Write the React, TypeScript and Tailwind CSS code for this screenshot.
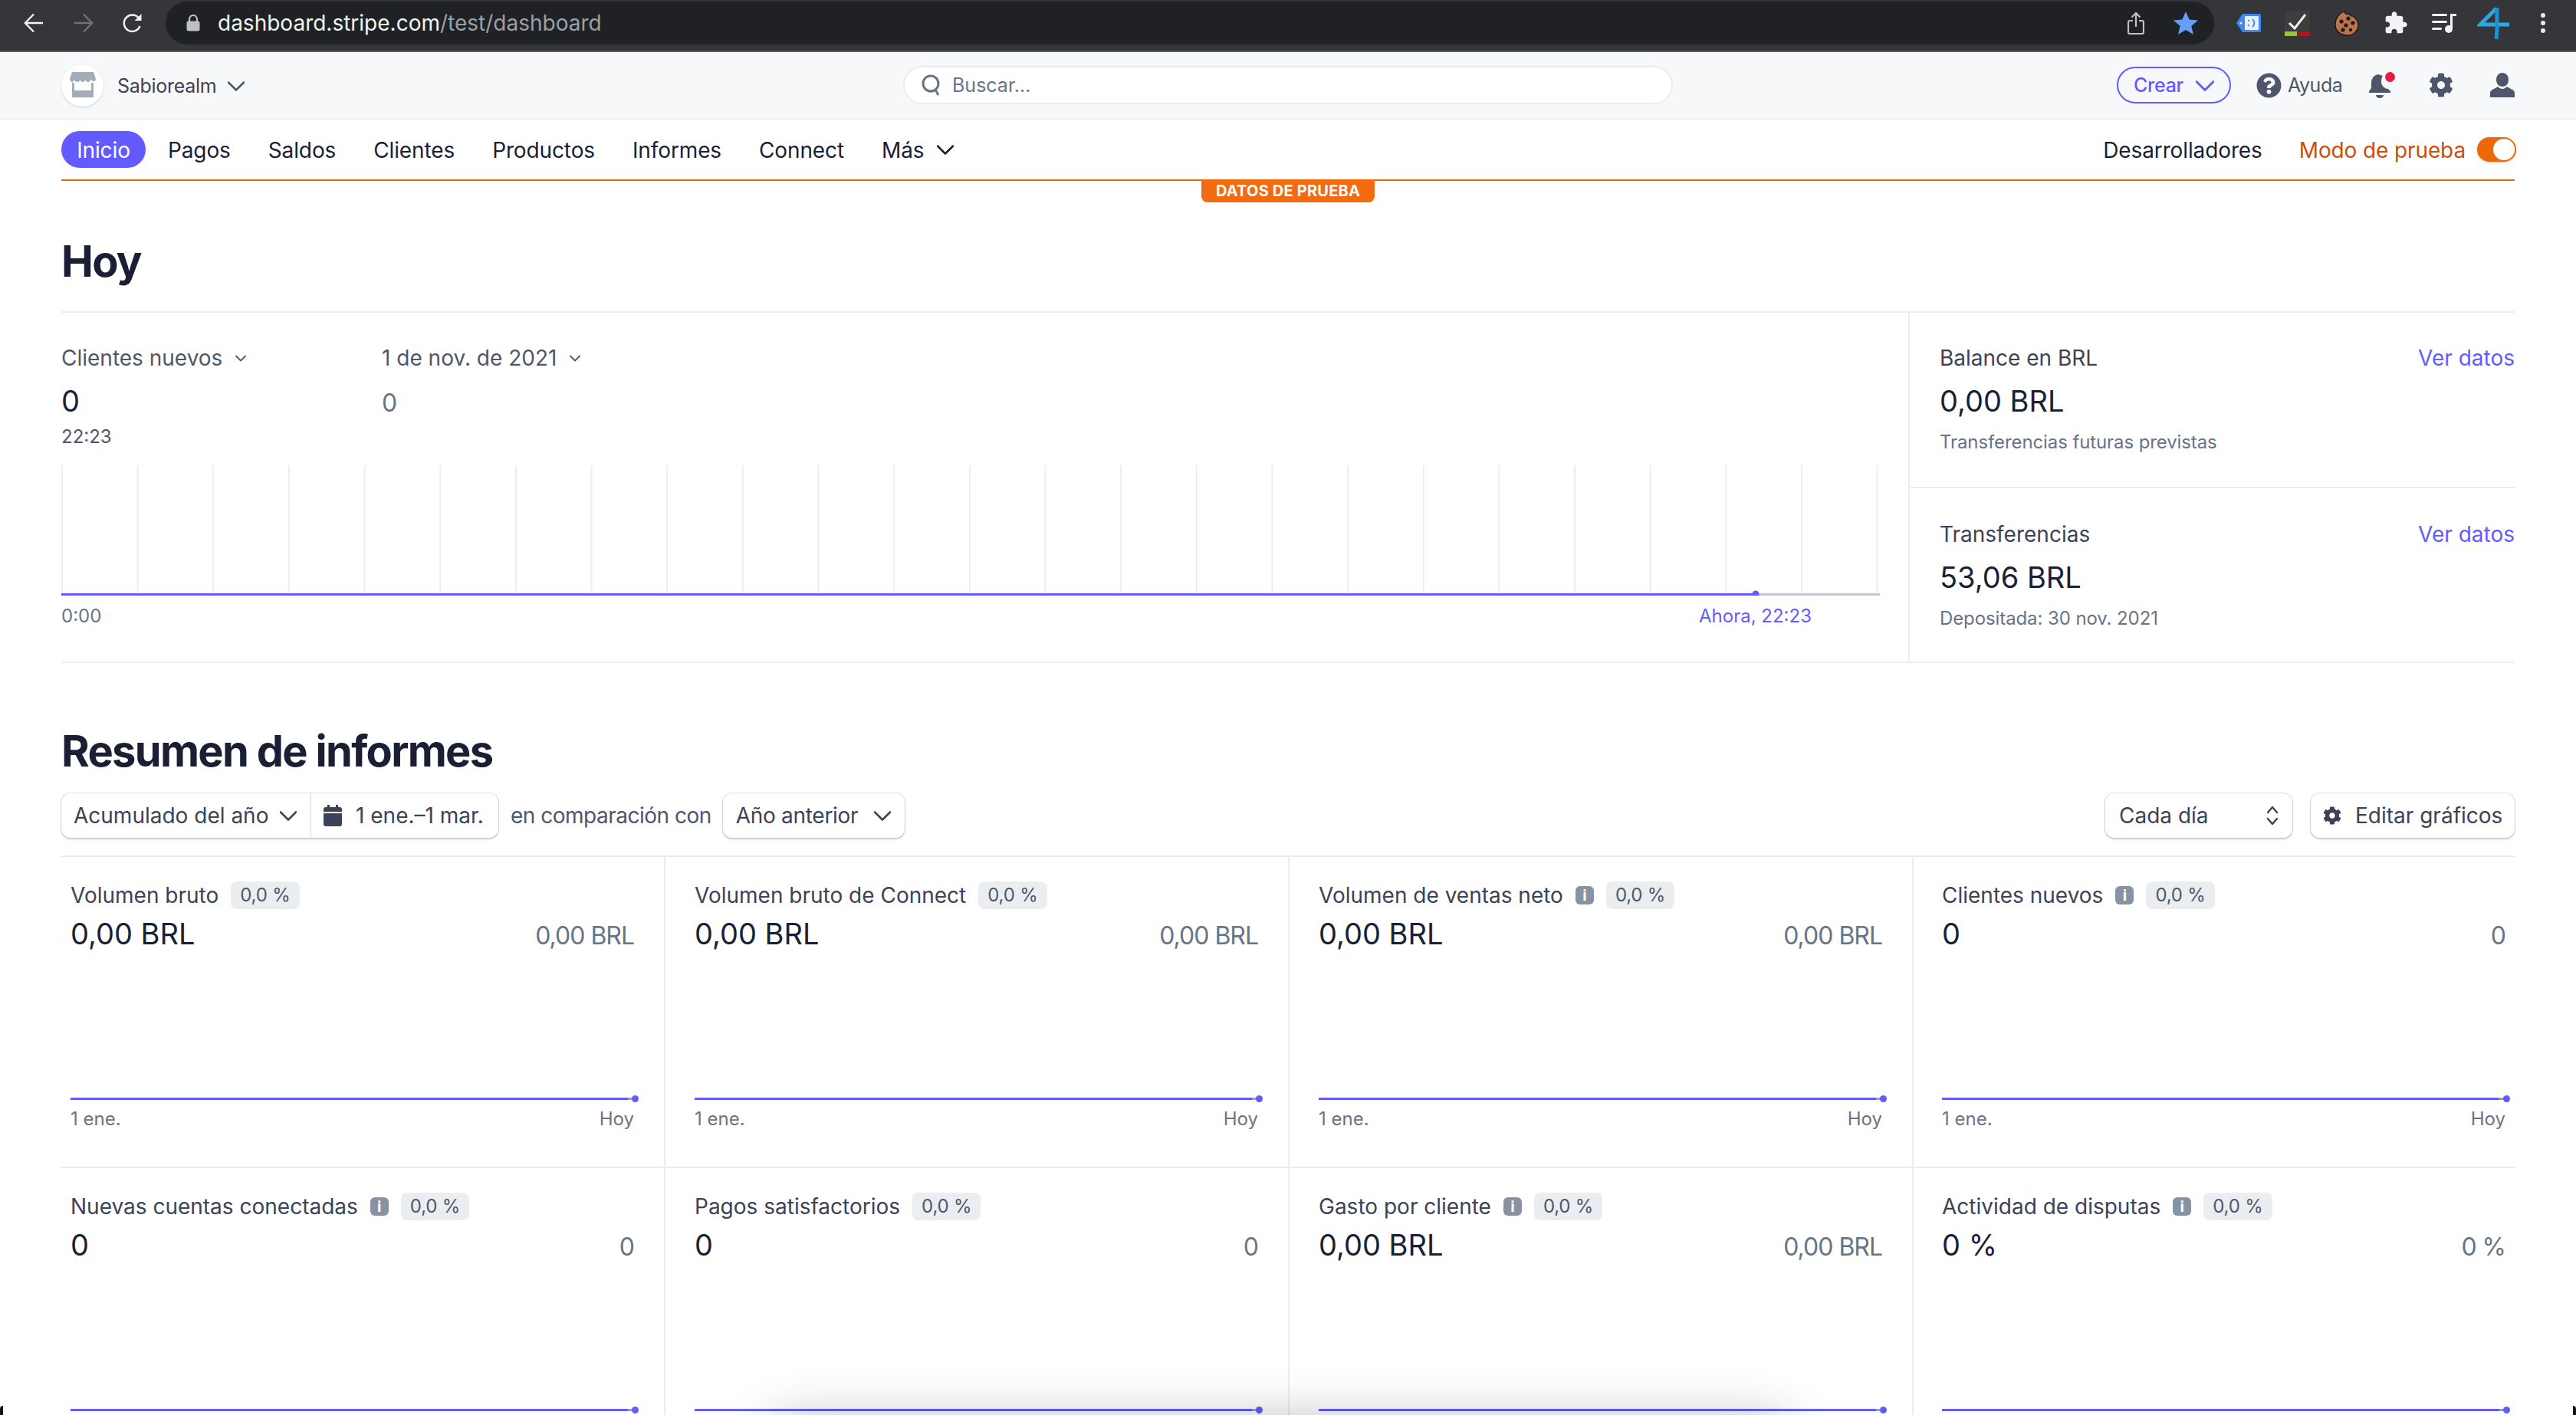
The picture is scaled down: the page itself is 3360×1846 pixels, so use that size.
import { FaCog, FaQuestionCircle } from "react-icons/fa";

const TABS = ["Pagos", "Saldos", "Clientes", "Productos", "Informes", "Connect"];

const CARDS = [
  { title: "Volumen bruto", value: "0,00 BRL", info: false, pad: "pl-3 pr-[39px]", axis: true },
  { title: "Volumen bruto de Connect", value: "0,00 BRL", info: false, pad: "pl-[38px] pr-[39px]", axis: true },
  { title: "Volumen de ventas neto", value: "0,00 BRL", info: true, pad: "pl-[38px] pr-[39px]", axis: true },
  { title: "Clientes nuevos", value: "0", info: true, pad: "pl-[37px] pr-3", axis: true },
  { title: "Nuevas cuentas conectadas", value: "0", info: true, pad: "pl-3 pr-[39px]", axis: false },
  { title: "Pagos satisfactorios", value: "0", info: false, pad: "pl-[38px] pr-[39px]", axis: false },
  { title: "Gasto por cliente", value: "0,00 BRL", info: true, pad: "pl-[38px] pr-[39px]", axis: false },
  { title: "Actividad de disputas", value: "0 %", info: true, pad: "pl-[37px] pr-3", axis: false },
];

function Chevron({ w, h, sw = 2.5, color = "currentColor" }: { w: number; h: number; sw?: number; color?: string }) {
  return (
    <svg width={w} height={h} viewBox={`0 0 ${w} ${h}`} fill="none" className="shrink-0">
      <path d={`M1 1.5 L${w / 2} ${h - 1.5} L${w - 1} 1.5`} stroke={color} strokeWidth={sw} strokeLinecap="round" strokeLinejoin="round" />
    </svg>
  );
}

function BrowserBar() {
  return (
    <div className="h-[68px] shrink-0 bg-[#35363a] border-b-2 border-[#5a5b5f] flex items-start pt-[2px] pl-[31px]">
      <div className="h-[56px] flex items-center gap-[39px]">
        <svg width="26" height="26" viewBox="0 0 26 26" fill="none" stroke="#f1f3f4" strokeWidth="2.4">
          <path d="M25 13H2M13 1.500 1.800 13 13 24.500" />
        </svg>
        <svg width="26" height="26" viewBox="0 0 26 26" fill="none" stroke="#6f7175" strokeWidth="2.4">
          <path d="M1 13h23M13 1.500 24.200 13 13 24.500" />
        </svg>
        <svg width="26" height="26" viewBox="0 0 26 26" fill="none" className="-ml-[1px]">
          <path d="M22.500 17a10.700 10.700 0 1 1-1-9.600" stroke="#f1f3f4" strokeWidth="2.4" />
          <path d="M24.500 1v9h-9z" fill="#f1f3f4" />
        </svg>
      </div>
      <div className="ml-[30px] w-[2672px] h-[56px] rounded-full bg-[#202124] flex items-center pl-[27px]">
        <svg width="18" height="22" viewBox="0 0 18 22" className="shrink-0">
          <path d="M4 9V6a5 5 0 0 1 10 0v3" fill="none" stroke="#bdc1c6" strokeWidth="2.2" />
          <rect x="0.5" y="8.5" width="17" height="13" rx="2.5" fill="#bdc1c6" />
        </svg>
        <div className="ml-[23px] text-[28px] leading-[40px] text-[#f1f3f4] whitespace-nowrap">
          dashboard.stripe.com<span className="text-[#9aa0a6]">/test/dashboard</span>
        </div>
        <svg width="22" height="30" viewBox="0 0 22 30" fill="none" className="ml-auto mr-[38px] shrink-0" stroke="#bdc1c6" strokeWidth="2.2">
          <path d="M7 12H3a2 2 0 0 0-2 2v13a2 2 0 0 0 2 2h16a2 2 0 0 0 2-2V14a2 2 0 0 0-2-2h-4" />
          <path d="M11 20V2M5.500 7.500 11 2l5.500 5.500" />
        </svg>
        <svg width="32" height="30" viewBox="0 0 32 30" className="mr-[21px] shrink-0">
          <path d="m16 0 4.600 10.600L32 11.500l-8.700 7.400L26 30l-10-6-10 6 2.700-11.100L0 11.500l11.400-.9z" fill="#669df6" />
        </svg>
      </div>
      <div className="h-[56px] ml-[29px] flex items-center">
        <svg width="32" height="26" viewBox="0 0 32 26" className="shrink-0">
          <path d="M8 1h22a2 2 0 0 1 2 2v20a2 2 0 0 1-2 2H8L0 13z" fill="#4285f4" />
          <rect x="11" y="4" width="18" height="18" rx="1" fill="#e8f0fe" />
          <circle cx="6" cy="13" r="1.6" fill="#e8f0fe" />
          <path d="M16 9v2M16 15v2M21 8c3 3 3 7 0 10" fill="none" stroke="#4285f4" strokeWidth="2" />
        </svg>
        <svg width="33" height="33" viewBox="0 0 33 33" className="ml-[31px] shrink-0">
          <rect x="0" y="0" width="33" height="26" fill="#3f3c3c" />
          <path d="m6 16 7 7L27 5" fill="none" stroke="#eceeef" strokeWidth="3" />
          <rect x="0" y="27" width="16" height="6" fill="#9bc53d" />
          <rect x="17" y="27" width="16" height="6" fill="#b11516" />
        </svg>
        <svg width="32" height="33" viewBox="0 0 32 33" className="ml-[32px] shrink-0">
          <path d="M13 1c1 3 3 4 6 3 1 2 3 3 5 3 4 3 7 6 7 12a14 14 0 0 1-15 13C8 32 1 26 1 18 1 10 6 3 13 1z" fill="#b8754f" stroke="#1b1210" strokeWidth="1.3" />
          <circle cx="18" cy="10" r="2.6" fill="#2a1710" />
          <circle cx="9" cy="14" r="2.6" fill="#2a1710" />
          <circle cx="24" cy="16" r="2.6" fill="#2a1710" />
          <circle cx="15" cy="19" r="2.6" fill="#2a1710" />
          <circle cx="11" cy="25" r="2.6" fill="#2a1710" />
          <circle cx="21" cy="25" r="2.2" fill="#2a1710" />
        </svg>
        <svg width="32" height="32" viewBox="0 0 24 24" fill="#f1f3f4" className="ml-[32px] shrink-0">
          <path d="M20.500 11H19V7c0-1.100-.9-2-2-2h-4V3.500C13 2.120 11.880 1 10.500 1S8 2.120 8 3.500V5H4c-1.100 0-1.990.9-1.990 2v3.800H3.500c1.490 0 2.700 1.210 2.700 2.700s-1.210 2.700-2.700 2.700H2V20c0 1.100.9 2 2 2h3.800v-1.500c0-1.490 1.210-2.700 2.700-2.700 1.490 0 2.700 1.210 2.700 2.700V22H17c1.100 0 2-.9 2-2v-4h1.500c1.380 0 2.500-1.120 2.500-2.500S21.880 11 20.500 11z" />
        </svg>
        <svg width="32" height="26" viewBox="0 0 32 26" className="ml-[31px] shrink-0" fill="#f1f3f4">
          <rect x="0" y="1" width="20" height="3" rx="1.5" />
          <rect x="0" y="10" width="20" height="3" rx="1.5" />
          <rect x="0" y="19" width="13" height="3" rx="1.5" />
          <rect x="24" y="1" width="8" height="3" />
          <rect x="24" y="1" width="3" height="20" />
          <circle cx="22" cy="21" r="5" />
        </svg>
        <svg width="44" height="46" viewBox="0 0 44 46" fill="none" className="ml-[27px] shrink-0">
          <path d="M25 4 4 25h38" stroke="#29a9df" strokeWidth="5" />
          <path d="M26 3v29l-1 12" stroke="#1c93cc" strokeWidth="5" />
        </svg>
        <div className="ml-[39px] flex flex-col gap-[4px]">
          <span className="w-[6px] h-[6px] rounded-full bg-[#e8eaed]" />
          <span className="w-[6px] h-[6px] rounded-full bg-[#e8eaed]" />
          <span className="w-[6px] h-[6px] rounded-full bg-[#e8eaed]" />
        </div>
      </div>
    </div>
  );
}

function Header() {
  return (
    <div className="h-[88px] shrink-0 bg-[#f7f8fa] border-b-2 border-[#ebeef1] px-[80px] flex items-center relative">
      <div className="w-[55px] h-[55px] rounded-full bg-white shadow-[0_1px_3px_rgba(60,66,87,0.2)] flex items-center justify-center">
        <svg width="34" height="34" viewBox="0 0 34 34" fill="#a3acb9">
          <path d="M3 0h28l3 9c0 2-2 4-3.500 3s-2.500-2-3-2c-.5 2-2 3-3.500 3s-3-1-3.500-3c-.5 2-2 3-3.500 3s-3-1-3.500-3c-.5 2-2 3-3.500 3S6 12 6 10c-1 2-2 3-3 3S0 11 0 9z" />
          <path d="M3 14h3v10h22V14h3v19H3z" />
        </svg>
      </div>
      <span className="ml-[18px] pt-[3px] text-[25px] tracking-[-0.3px] text-[#3c4257]">Sabiorealm</span>
      <div className="ml-[15px] pt-[3px] text-[#4f566b]">
        <Chevron w={22} h={13} />
      </div>
      <div className="absolute left-[1178px] w-[1004px] h-[50px] rounded-full bg-white border-2 border-[#ebeef1] flex items-center pl-[22px]">
        <svg width="26" height="28" viewBox="0 0 26 28" fill="none" stroke="#697386" strokeWidth="3">
          <circle cx="12" cy="12" r="10" />
          <path d="m18 20 4 7" />
        </svg>
        <span className="ml-[14px] pt-[2px] text-[25px] text-[#697386]">Buscar...</span>
      </div>
      <div className="ml-auto h-[48px] w-[149px] rounded-full border-2 border-[#635bff] flex items-center justify-center gap-[16px] pt-[2px] text-[#635bff] text-[25px] tracking-[-0.3px] font-medium">
        Crear
        <Chevron w={24} h={14} sw={2.8} />
      </div>
      <FaQuestionCircle className="ml-[33px] w-[33px] h-[33px] text-[#4f566b] shrink-0" />
      <span className="ml-[8px] pt-[2px] w-[70px] text-[25px] tracking-[-0.5px] text-[#4f566b]">Ayuda</span>
      <div className="ml-[36px] relative w-[28px] h-[36px] shrink-0">
        <svg width="28" height="36" viewBox="0 0 28 36" fill="#4f566b">
          <path d="M12 4c-6 1-9 6-9 11v7l-3 4v2h28v-2l-3-3c-4 0-9-4-9-9 0-4 1-7 2-8z" />
          <path d="M9 31h10c0 2-2 4-5 4s-5-2-5-4z" />
        </svg>
        <span className="absolute right-[-6px] top-[1px] w-[13px] h-[13px] rounded-full bg-[#e61947]" />
      </div>
      <FaCog className="ml-[50px] w-[32px] h-[32px] text-[#4f566b] shrink-0" />
      <svg width="32" height="32" viewBox="0 0 32 32" fill="#4f566b" className="ml-[48px] shrink-0">
        <path d="M16 0c5 0 8 4 8 9s-3 9-8 9-8-4-8-9 3-9 8-9z" />
        <path d="M0 32v-6c0-4 6-5 10-8 2 2 4 3 6 3s4-1 6-3c4 3 10 4 10 8v6z" />
      </svg>
    </div>
  );
}

function NavTabs() {
  return (
    <div className="h-[80px] shrink-0 mx-[80px] border-b-2 border-[#ed6704] flex items-center relative text-[28px] tracking-[-0.12px] text-[#1a1f36]">
      <div className="h-[48px] w-[110px] rounded-full bg-[#635bff] text-white flex items-center justify-center pt-[1px]">Inicio</div>
      <div className="flex items-center gap-[9px] ml-[9px] pt-[1px]">
        {TABS.map((t) => (
          <span key={t} className="px-[20px]">{t}</span>
        ))}
        <span className="px-[20px] flex items-center gap-[17px]">
          Más
          <Chevron w={22} h={13} />
        </span>
      </div>
      <span className="ml-auto pt-[1px]">Desarrolladores</span>
      <span className="ml-[48px] pt-[1px] text-[#cd4d0f]">Modo de prueba</span>
      <div className="ml-[15px] -mr-[2px] w-[51px] h-[32px] rounded-full bg-[#ed6704] flex items-center justify-end pr-[2px] shadow-[0_1px_3px_rgba(60,66,87,0.25)]">
        <span className="w-[28px] h-[28px] rounded-full bg-white" />
      </div>
      <div className="absolute left-[1487px] top-[78px] w-[226px] h-[30px] rounded-b-[8px] bg-[#f26b10] text-white text-[20px] font-bold flex items-center justify-center tracking-[0.2px]">
        DATOS DE PRUEBA
      </div>
    </div>
  );
}

function TodayChart() {
  const gridX = Array.from({ length: 25 }, (_, i) => 1 + i * 98.65);
  return (
    <svg width="2372" height="170" className="block mt-[21px]">
      {gridX.map((x) => (
        <line key={x} x1={x} x2={x} y1="0" y2="168" stroke="#ebeef1" strokeWidth="2" />
      ))}
      <rect x="0" y="167" width="2372" height="3" fill="#c1c9d2" />
      <rect x="0" y="167" width="2210" height="3" fill="#635bff" />
      <circle cx="2210" cy="168" r="4.500" fill="#635bff" />
    </svg>
  );
}

function StatCell({ title, value, sub, className }: { title: string; value: string; sub: string; className: string }) {
  return (
    <div className={className}>
      <div className="flex justify-between leading-[36px]">
        <span className="text-[#3c4257]">{title}</span>
        <span className="text-[#635bff]">Ver datos</span>
      </div>
      <div className="mt-[14px] text-[38px] leading-[48px] text-[#1a1f36]">{value}</div>
      <div className="mt-[14px] text-[24px] leading-[32px] tracking-[-0.1px] text-[#697386]">{sub}</div>
    </div>
  );
}

function TodaySection() {
  return (
    <div className="mx-[80px] flex h-[459px] shrink-0 border-t-2 border-b-2 border-[#ebeef1] text-[28px]">
      <div className="w-[2409px] pt-[41px]">
        <div className="grid grid-cols-[418px_1fr] leading-[36px] text-[#4f566b]">
          <span className="flex items-center gap-[17px]">Clientes nuevos <Chevron w={14} h={9} sw={1.8} /></span>
          <span className="flex items-center gap-[17px]">1 de nov. de 2021 <Chevron w={14} h={9} sw={1.8} /></span>
        </div>
        <div className="grid grid-cols-[418px_1fr] mt-[14px] items-baseline">
          <span className="text-[38px] leading-[48px] text-[#1a1f36]">0</span>
          <span className="text-[32px] leading-[48px] text-[#697386]">0</span>
        </div>
        <div className="mt-[4px] text-[24px] leading-[32px] text-[#4f566b]">22:23</div>
        <TodayChart />
        <div className="mt-[11px] pr-[126px] flex justify-between text-[24px] leading-[32px]">
          <span className="text-[#697386]">0:00</span>
          <span className="text-[#635bff]">Ahora, 22:23</span>
        </div>
      </div>
      <div className="flex-1 border-l-2 border-[#ebeef1] flex flex-col">
        <StatCell title="Balance en BRL" value="0,00 BRL" sub="Transferencias futuras previstas" className="h-[229px] pl-[39px] pt-[41px] border-b-2 border-[#ebeef1]" />
        <StatCell title="Transferencias" value="53,06 BRL" sub="Depositada: 30 nov. 2021" className="pl-[39px] pt-[42px]" />
      </div>
    </div>
  );
}

const BTN = "h-[58px] rounded-[12px] bg-white shadow-[0_0_0_1px_rgba(60,66,87,0.16),0_2px_3px_rgba(60,66,87,0.22)] flex items-center text-[#3c4257]";

function Toolbar() {
  return (
    <div className="mt-[20px] flex items-center text-[28px]">
      <div className={BTN}>
        <span className="w-[325px] flex items-center justify-between pl-[16px] pr-[18px]">
          Acumulado del año <Chevron w={22} h={13} />
        </span>
        <span className="w-[245px] h-full border-l border-[#d5d8de] flex items-center pl-[16px] gap-[18px]">
          <svg width="24" height="28" viewBox="0 0 24 28" fill="#3c4257" className="shrink-0">
            <path d="M5 0h3v3h8V0h3v3h2a3 3 0 0 1 3 3v3H0V6a3 3 0 0 1 3-3h2zM0 11h24v14a3 3 0 0 1-3 3H3a3 3 0 0 1-3-3z" />
          </svg>
          1 ene.–1 mar.
        </span>
      </div>
      <span className="ml-[16px] tracking-[-0.5px] text-[#4f566b]">en comparación con</span>
      <div className={`${BTN} ml-[15px] w-[237px] justify-between pl-[17px] pr-[18px]`}>
        <span className="tracking-[-0.3px]">Año anterior</span> <Chevron w={22} h={13} />
      </div>
      <div className={`${BTN} ml-auto w-[244px] justify-between pl-[18px] pr-[18px]`}>
        Cada día
        <svg width="16" height="26" viewBox="0 0 16 26" fill="none" stroke="#3c4257" strokeWidth="2.4" strokeLinecap="round" strokeLinejoin="round">
          <path d="M2 9 8 2l6 7M2 17l6 7 6-7" />
        </svg>
      </div>
      <div className={`${BTN} ml-[24px] w-[266px] pl-[16px] gap-[18px]`}>
        <FaCog className="w-[24px] h-[24px] shrink-0" />
        Editar gráficos
      </div>
    </div>
  );
}

function MetricCard({ title, value, info, pad, axis }: (typeof CARDS)[number]) {
  return (
    <div className={`h-[406px] pt-[32px] border-b-2 border-[#ebeef1] [&:not(:nth-child(4n+1))]:border-l-2 ${pad}`}>
      <div className="flex items-center h-[36px]">
        <span className="text-[28px] text-[#3c4257]">{title}</span>
        {info && (
          <span className="ml-[16px] w-[24px] h-[24px] rounded-[6px] bg-[#8792a2] text-white text-[20px] font-bold flex items-center justify-center">i</span>
        )}
        <span className="ml-[16px] h-[36px] px-[12px] rounded-[8px] bg-[#ebeef1] text-[24px] tracking-[-0.2px] text-[#4f566b] flex items-center">0,0 %</span>
      </div>
      <div className="mt-[8px] flex items-baseline justify-between">
        <span className="text-[38px] leading-[48px] text-[#1a1f36]">{value}</span>
        <span className="text-[32px] leading-[48px] tracking-[-1px] text-[#697386]">{value}</span>
      </div>
      <div className="mt-[182px] h-[12px] flex items-center">
        <div className="flex-1 h-[3px] bg-[#635bff]" />
        <div className="w-[7px] h-[3px] bg-[#9a9fa8]" />
        <div className="w-[9px] h-[9px] rounded-full bg-[#635bff] -ml-[2px] -mr-[6px]" />
      </div>
      {axis && (
        <div className="mt-[5px] flex justify-between text-[24px] leading-[32px] text-[#697386]">
          <span>1 ene.</span>
          <span>Hoy</span>
        </div>
      )}
    </div>
  );
}

export default function App() {
  return (
    <div className="relative w-[3360px] h-[1846px] overflow-hidden bg-white flex flex-col [font-family:Inter,sans-serif]">
      <BrowserBar />
      <Header />
      <NavTabs />
      <div className="mx-[80px] h-[170px] shrink-0 flex items-end pb-[30px]">
        <h1 className="text-[56px] leading-[70px] font-bold tracking-[-1.7px] text-[#1a1f36]">Hoy</h1>
      </div>
      <TodaySection />
      <div className="mx-[80px] shrink-0">
        <h2 className="mt-[80px] text-[56px] leading-[70px] font-bold tracking-[-1.7px] text-[#1a1f36]">Resumen de informes</h2>
        <Toolbar />
        <div className="mt-[23px] border-t-2 border-[#ebeef1] grid grid-cols-[786px_814px_814px_786px]">
          {CARDS.map((c) => (
            <MetricCard key={c.title} {...c} />
          ))}
        </div>
      </div>
      {/* menu peeking in from below the window */}
      <div className="absolute left-[1010px] top-[1858px] w-[1320px] h-[60px] rounded-[12px] bg-white shadow-[0_0_70px_rgba(0,0,0,0.32)]" />
      {/* rounded window corners */}
      <div className="absolute left-0 bottom-0 w-[4px] h-[12px] rounded-tl-[4px] bg-[#15131f]" />
      <div className="absolute right-0 bottom-0 w-[4px] h-[12px] rounded-tr-[4px] bg-[#15131f]" />
    </div>
  );
}
